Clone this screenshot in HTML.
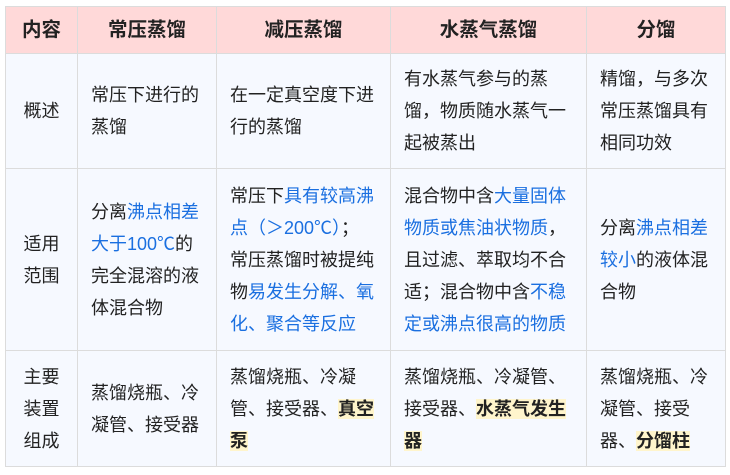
<!DOCTYPE html>
<html><head><meta charset="utf-8"><style>
body{margin:0;background:#fff;font-family:"Liberation Sans","Noto Sans CJK SC",sans-serif;}
table{position:absolute;left:5px;top:6px;border-collapse:collapse;table-layout:fixed;width:720px;font-size:18px;color:#222;}
td,th{border:1.5px solid #dcdcdc;padding:0 13px;line-height:32px;vertical-align:middle;background:#f6f9ff;}
th{background:#ffd9d9;font-weight:bold;font-size:19.5px;text-align:center;height:46px;padding:0;}
td.c{text-align:center;padding:0 4px;}
.b{color:#1a6fe0}
.h{background:#fff5cc;font-weight:bold;}
</style></head><body>
<table>
<colgroup><col style="width:72px"><col style="width:139px"><col style="width:174px"><col style="width:196px"><col style="width:139px"></colgroup>
<tr><th>内容</th><th>常压蒸馏</th><th>减压蒸馏</th><th>水蒸气蒸馏</th><th>分馏</th></tr>
<tr style="height:115px"><td class="c">概述</td><td>常压下进行的蒸馏</td><td>在一定真空度下进行的蒸馏</td><td>有水蒸气参与的蒸馏，物质随水蒸气一起被蒸出</td><td>精馏，与多次常压蒸馏具有相同功效</td></tr>
<tr style="height:182px"><td class="c">适用<br>范围</td><td>分离<span class="b">沸点相差大于100℃</span>的完全混溶的液体混合物</td><td>常压下<span class="b">具有较高沸点（＞200℃）</span>；常压蒸馏时被提纯物<span class="b">易发生分解、氧化、聚合等反应</span></td><td>混合物中含<span class="b">大量固体物质或焦油状物质</span>，且过滤、萃取均不合适；混合物中含<span class="b">不稳定或沸点很高的物质</span></td><td>分离<span class="b">沸点相差较小</span>的液体混合物</td></tr>
<tr style="height:116px"><td class="c">主要<br>装置<br>组成</td><td>蒸馏烧瓶、冷凝管、接受器</td><td>蒸馏烧瓶、冷凝管、接受器、<span class="h">真空泵</span></td><td>蒸馏烧瓶、冷凝管、接受器、<span class="h">水蒸气发生器</span></td><td>蒸馏烧瓶、冷凝管、接受器、<span class="h">分馏柱</span></td></tr>
</table>
</body></html>
